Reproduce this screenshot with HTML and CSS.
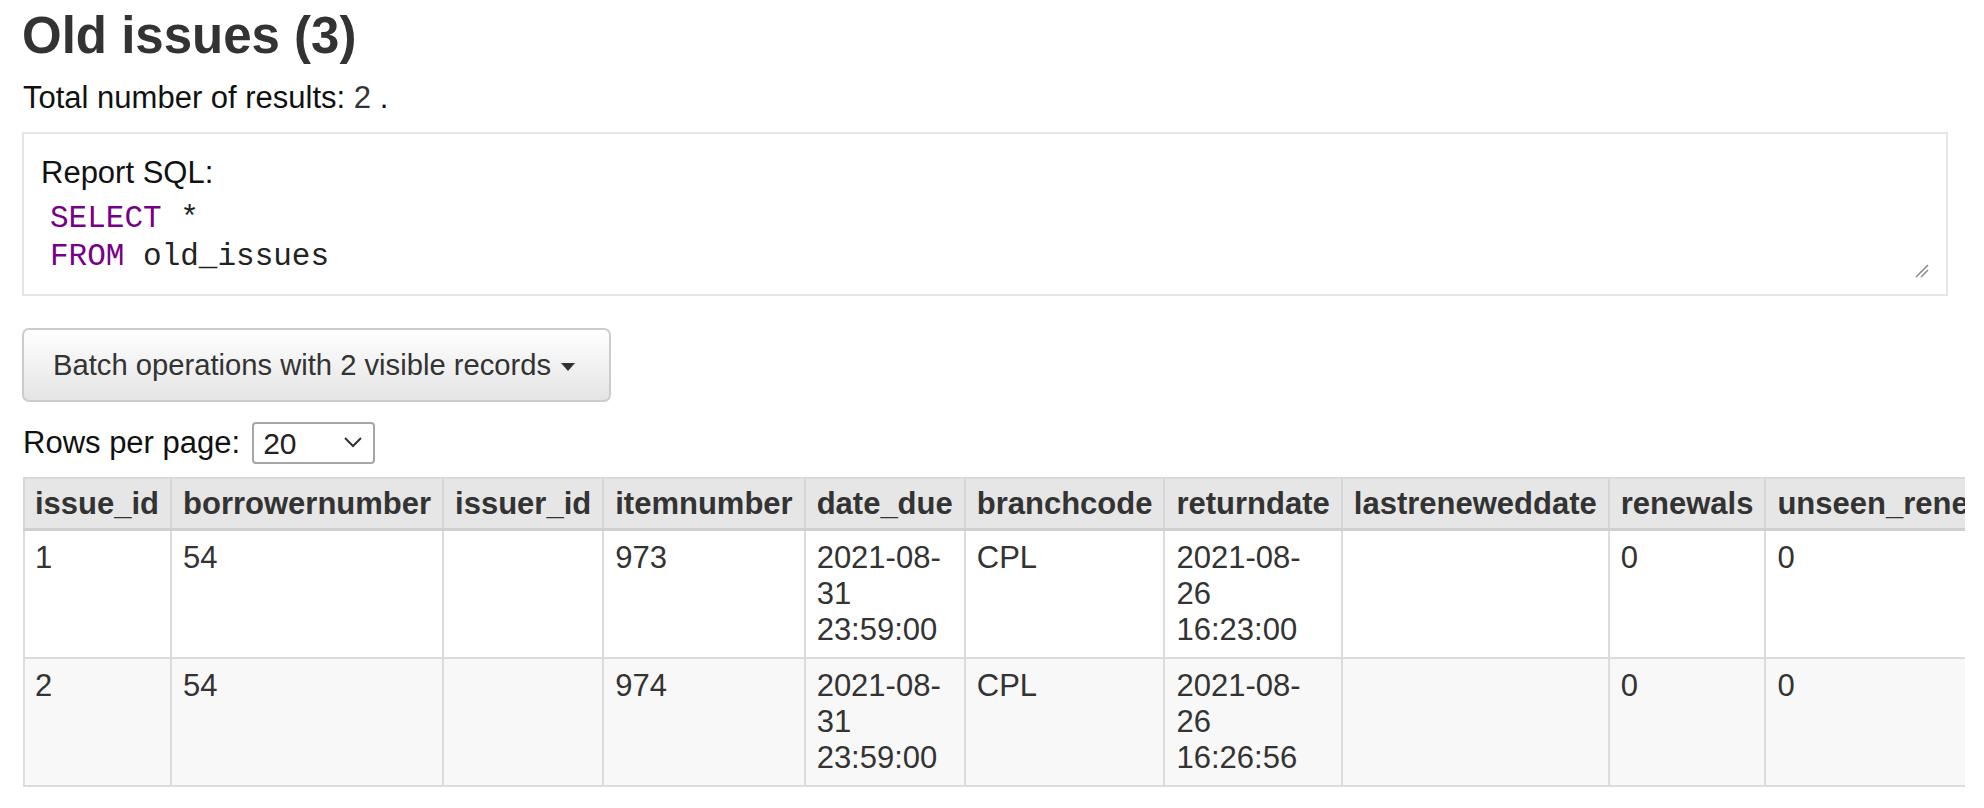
FILE: index.html
```html
<!DOCTYPE html>
<html lang="en">
<head>
<meta charset="utf-8">
<title>Old issues (3)</title>
<link rel="stylesheet" href="styles.css">
</head>
<body>
<div class="page">
  <h1 class="title">Old issues (3)</h1>
  <p class="total">Total number of results: <span class="count">2</span> .</p>

  <div class="report-sql">
    <div class="sql-label">Report SQL:</div>
    <pre class="sql"><span class="kw">SELECT</span> *
<span class="kw">FROM</span> old_issues</pre>
    <svg class="resize-handle" width="14" height="14" viewBox="0 0 14 14" aria-hidden="true">
      <line x1="1" y1="13" x2="13" y2="1" stroke="#8c8c8c" stroke-width="1.6"/>
      <line x1="6" y1="13" x2="13" y2="6" stroke="#8c8c8c" stroke-width="1.6"/>
    </svg>
  </div>

  <button class="btn-batch" type="button">Batch operations with 2 visible records<span class="caret"></span></button>

  <div class="rows-per-page">
    <label class="rpp-label" for="rpp">Rows per page:</label>
    <div class="select-wrap">
      <select id="rpp" class="rpp-select">
        <option>20</option>
        <option>50</option>
        <option>100</option>
      </select>
      <svg class="chevron" width="20" height="12" viewBox="0 0 20 12" aria-hidden="true">
        <polyline points="2,2 10,10 18,2" fill="none" stroke="#333" stroke-width="2"/>
      </svg>
    </div>
  </div>

  <div class="table-wrap">
    <table class="results">
      <thead>
        <tr>
          <th>issue_id</th>
          <th>borrowernumber</th>
          <th>issuer_id</th>
          <th>itemnumber</th>
          <th>date_due</th>
          <th>branchcode</th>
          <th>returndate</th>
          <th>lastreneweddate</th>
          <th>renewals</th>
          <th>unseen_renewals</th>
        </tr>
      </thead>
      <tbody>
        <tr>
          <td>1</td>
          <td>54</td>
          <td></td>
          <td>973</td>
          <td>2021-08-<wbr>31 23:59:00</td>
          <td>CPL</td>
          <td>2021-08-<wbr>26 16:23:00</td>
          <td></td>
          <td>0</td>
          <td>0</td>
        </tr>
        <tr>
          <td>2</td>
          <td>54</td>
          <td></td>
          <td>974</td>
          <td>2021-08-<wbr>31 23:59:00</td>
          <td>CPL</td>
          <td>2021-08-<wbr>26 16:26:56</td>
          <td></td>
          <td>0</td>
          <td>0</td>
        </tr>
      </tbody>
    </table>
  </div>
</div>
</body>
</html>
```

FILE: styles.css
```css
html, body {
  margin: 0;
  padding: 0;
  background: #ffffff;
}

body {
  font-family: "Liberation Sans", Arial, Helvetica, sans-serif;
  color: #111111;
  font-size: 31px;
  line-height: 36px;
}

.page {
  padding: 6px 0 0 22px;
}

.title {
  margin: 0;
  font-size: 51px;
  line-height: 60px;
  font-weight: bold;
  color: #333333;
}

.total {
  margin: 14px 0 0 1px;
  font-size: 31px;
  line-height: 36px;
}

.count {
  color: #333333;
}

.report-sql {
  position: relative;
  margin: 16px 36px 0 0;
  border: 2px solid #e6e6e6;
  padding: 21px 17px 18px 17px;
  height: 121px;
}

.sql-label {
  font-size: 31px;
  line-height: 36px;
  color: #111111;
}

.sql {
  margin: 9px 0 0 9px;
  font-family: "Liberation Mono", "Courier New", monospace;
  font-size: 31px;
  line-height: 38px;
  color: #222222;
}

.kw {
  color: #770088;
}

.resize-handle {
  position: absolute;
  right: 17px;
  bottom: 16px;
}

.btn-batch {
  display: inline-flex;
  align-items: center;
  margin-top: 32px;
  padding: 17px 34px 17px 29px;
  border: 2px solid #cccccc;
  border-radius: 7px;
  background: linear-gradient(to bottom, #ffffff 0%, #e4e4e4 100%);
  font-family: "Liberation Sans", Arial, Helvetica, sans-serif;
  font-size: 29.2px;
  line-height: 36px;
  color: #333333;
  cursor: pointer;
}

.caret {
  display: inline-block;
  width: 0;
  height: 0;
  margin-left: 10px;
  margin-top: 3px;
  border-top: 8px solid #333333;
  border-left: 7px solid transparent;
  border-right: 7px solid transparent;
}

.rows-per-page {
  display: flex;
  align-items: center;
  gap: 12px;
  margin-top: 20px;
  height: 42px;
}

.rpp-label {
  font-size: 31px;
  line-height: 36px;
  color: #111111;
  margin-left: 1px;
}

.select-wrap {
  position: relative;
  width: 123px;
  height: 42px;
}

.rpp-select {
  appearance: none;
  -webkit-appearance: none;
  box-sizing: border-box;
  width: 123px;
  height: 42px;
  margin: 0;
  padding: 0 0 0 9px;
  border: 2px solid #a6a6a6;
  border-radius: 4px;
  background: #ffffff;
  font-family: "Liberation Sans", Arial, Helvetica, sans-serif;
  font-size: 30px;
  color: #222222;
}

.chevron {
  position: absolute;
  right: 12px;
  top: 14px;
  pointer-events: none;
}

.table-wrap {
  margin: 13px 19px 0 1px;
  overflow: hidden;
}

.results {
  border-collapse: collapse;
  font-size: 31px;
  line-height: 36px;
  color: #333333;
  border-top: 2px solid #d9d9d9;
  border-bottom: 2px solid #d4d4d4;
}

.results th {
  background: #e6e6e6;
  font-weight: bold;
  text-align: left;
  white-space: nowrap;
  padding: 7px 11px 6px 11px;
  border-left: 2px solid #d6d6d6;
  border-right: 2px solid #d6d6d6;
  border-bottom: 3px solid #cfcfcf;
  color: #333333;
}

.results th:first-child {
  padding-left: 10px;
}

.results td {
  padding: 9px 11px 9px 11px;
  vertical-align: top;
  text-align: left;
  border-left: 2px solid #dcdcdc;
  border-right: 2px solid #dcdcdc;
  border-bottom: 2px solid #dcdcdc;
}

.results td:first-child {
  padding-left: 10px;
}

.results tbody tr:nth-child(even) td {
  background: #f8f8f8;
}

.results tbody tr:nth-child(odd) td {
  background: #ffffff;
}
```
